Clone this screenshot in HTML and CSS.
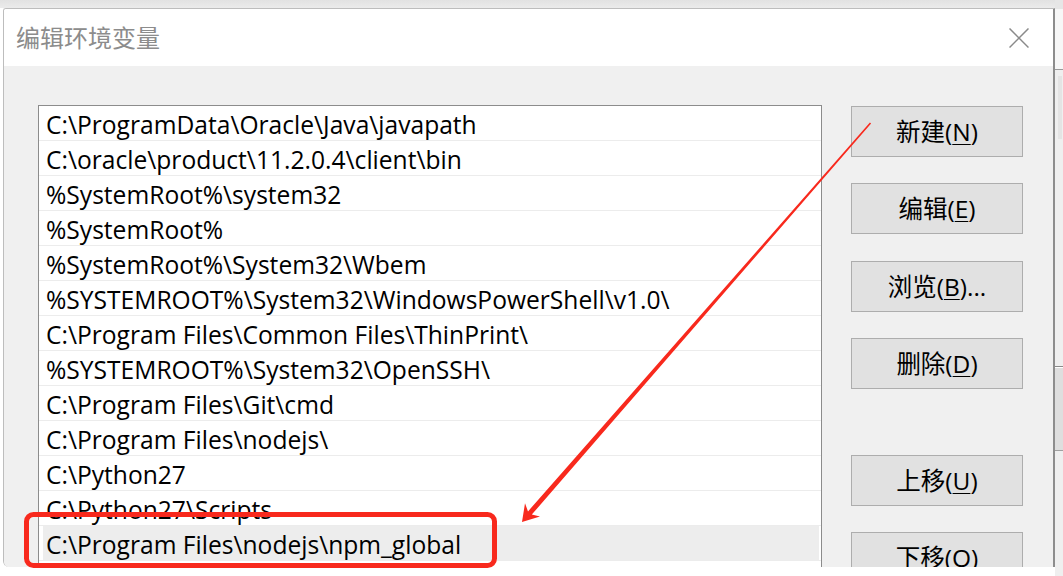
FILE: index.html
```html
<!DOCTYPE html>
<html lang="zh-CN">
<head>
<meta charset="utf-8">
<title>编辑环境变量</title>
<link rel="stylesheet" href="styles.css">
</head>
<body>
<div class="screen">
  <div class="dialog">
    <div class="titlebar">
      <span class="title">编辑环境变量</span>
      <svg class="close" width="20" height="20" viewBox="0 0 20 20" aria-hidden="true">
        <path d="M0.5 0.5 L19.5 19.5 M19.5 0.5 L0.5 19.5" stroke="#8a8a8a" stroke-width="1.5" fill="none"/>
      </svg>
    </div>
    <div class="body">
      <div class="list">
        <div class="row">C:\ProgramData\Oracle\Java\javapath</div>
        <div class="row">C:\oracle\product\11.2.0.4\client\bin</div>
        <div class="row">%SystemRoot%\system32</div>
        <div class="row">%SystemRoot%</div>
        <div class="row">%SystemRoot%\System32\Wbem</div>
        <div class="row">%SYSTEMROOT%\System32\WindowsPowerShell\v1.0\</div>
        <div class="row">C:\Program Files\Common Files\ThinPrint\</div>
        <div class="row">%SYSTEMROOT%\System32\OpenSSH\</div>
        <div class="row">C:\Program Files\Git\cmd</div>
        <div class="row">C:\Program Files\nodejs\</div>
        <div class="row">C:\Python27</div>
        <div class="row">C:\Python27\Scripts</div>
        <div class="row selected">C:\Program Files\nodejs\npm_global</div>
      </div>
      <div class="buttons">
        <div class="btn">新建(<u>N</u>)</div>
        <div class="btn">编辑(<u>E</u>)</div>
        <div class="btn b3">浏览(<u>B</u>)...</div>
        <div class="btn">删除(<u>D</u>)</div>
        <div class="btn b5">上移(<u>U</u>)</div>
        <div class="btn">下移(<u>O</u>)</div>
      </div>
    </div>
  </div>
  <div class="side">
    <div class="side-top"></div>
    <div class="side-head"></div>
    <div class="side-pane">
      <div class="side-thumb"></div>
    </div>
    <div class="side-band"></div>
    <div class="side-rest"></div>
  </div>
  <svg class="annot" width="1063" height="576" viewBox="0 0 1063 576" aria-hidden="true">
    <rect x="26.5" y="514.5" width="468" height="51" rx="7" ry="7" fill="none" stroke="#f8291d" stroke-width="5"/>
    <polygon fill="#f8291d" points="522,522 540,516.5 531.8,514.6 871.1,123.5 869.9,122.5 528,511.4 525,503.3"/>
  </svg>
</div>
</body>
</html>
```

FILE: styles.css
```css
html, body {
  margin: 0;
  padding: 0;
}

body {
  background: #ffffff;
  font-family: "Open Sans", "Noto Sans CJK SC", sans-serif;
  color: #000;
}

.screen {
  width: 1063px;
  height: 576px;
  position: relative;
  overflow: hidden;
  display: flex;
  align-items: flex-start;
  background: linear-gradient(#e2e2e2 0, #ebebeb 8px, #ffffff 8px);
}

.dialog {
  margin: 8px 0 0 3px;
  width: 1049px;
  height: 558px;
  flex-shrink: 0;
  border: 1px solid #bdbdbd;
  border-right: 2px solid #8d8d8d;
  border-bottom: none;
  border-radius: 3px 0 0 6px;
  overflow: hidden;
  display: flex;
  flex-direction: column;
}

.titlebar {
  height: 57px;
  flex-shrink: 0;
  background: #ffffff;
  display: flex;
  align-items: center;
  justify-content: space-between;
  padding: 0 24px 0 12px;
}

.title {
  font-family: "Noto Sans CJK SC", sans-serif;
  font-size: 24px;
  color: #8c8c8c;
  line-height: 1;
  margin-top: -1px;
}

.close {
  display: block;
}

.body {
  flex: 1;
  background: #f0f0f0;
  display: flex;
  align-items: flex-start;
  padding: 39px 0 0 34px;
  gap: 29px;
}

.list {
  width: 782px;
  height: 461px;
  flex-shrink: 0;
  background: #ffffff;
  border: 1px solid #8c8c8c;
  border-bottom: none;
  overflow: hidden;
}

.row {
  height: 34px;
  line-height: 37px;
  border-bottom: 1px solid #ececec;
  padding-left: 7px;
  font-size: 24.6px;
  white-space: nowrap;
  color: #000;
}

.row.selected {
  background: linear-gradient(to right, #ffffff 4px, #ededed 4px, #ededed calc(100% - 2px), #ffffff calc(100% - 2px));
}

.buttons {
  display: flex;
  flex-direction: column;
  gap: 26px;
  padding-top: 1px;
}

.btn {
  width: 170px;
  height: 49px;
  border: 1px solid #adadad;
  background: #e1e1e1;
  font-size: 24.5px;
  line-height: 50px;
  text-align: center;
  color: #000;
  white-space: nowrap;
  overflow: hidden;
}

.btn u {
  text-underline-offset: 3px;
  text-decoration-thickness: 1px;
}

.btn.b3 {
  margin-top: 1px;
}

.btn.b5 {
  margin-top: 40px;
}

.side {
  width: 8px;
  height: 576px;
  flex-shrink: 0;
  display: flex;
  flex-direction: column;
}

.side-top {
  height: 9px;
  background: #e6e6e6;
}

.side-head {
  height: 60px;
  background: #f7f7f7;
  border-bottom: 1px solid #9a9a9a;
}

.side-pane {
  height: 290px;
  background: #efefef;
  border-bottom: 1px solid #8a8a8a;
  padding: 6px 1px 0 3px;
}

.side-thumb {
  height: 63px;
  background: #e4e4e4;
}

.side-band {
  height: 82px;
  background: #dedede;
  border-top: 1px solid #ffffff;
  border-bottom: 1px solid #a0a0a0;
}

.side-rest {
  flex: 1;
  background: #efefef;
}

.annot {
  position: absolute;
  left: 0;
  top: 0;
  pointer-events: none;
}
```
